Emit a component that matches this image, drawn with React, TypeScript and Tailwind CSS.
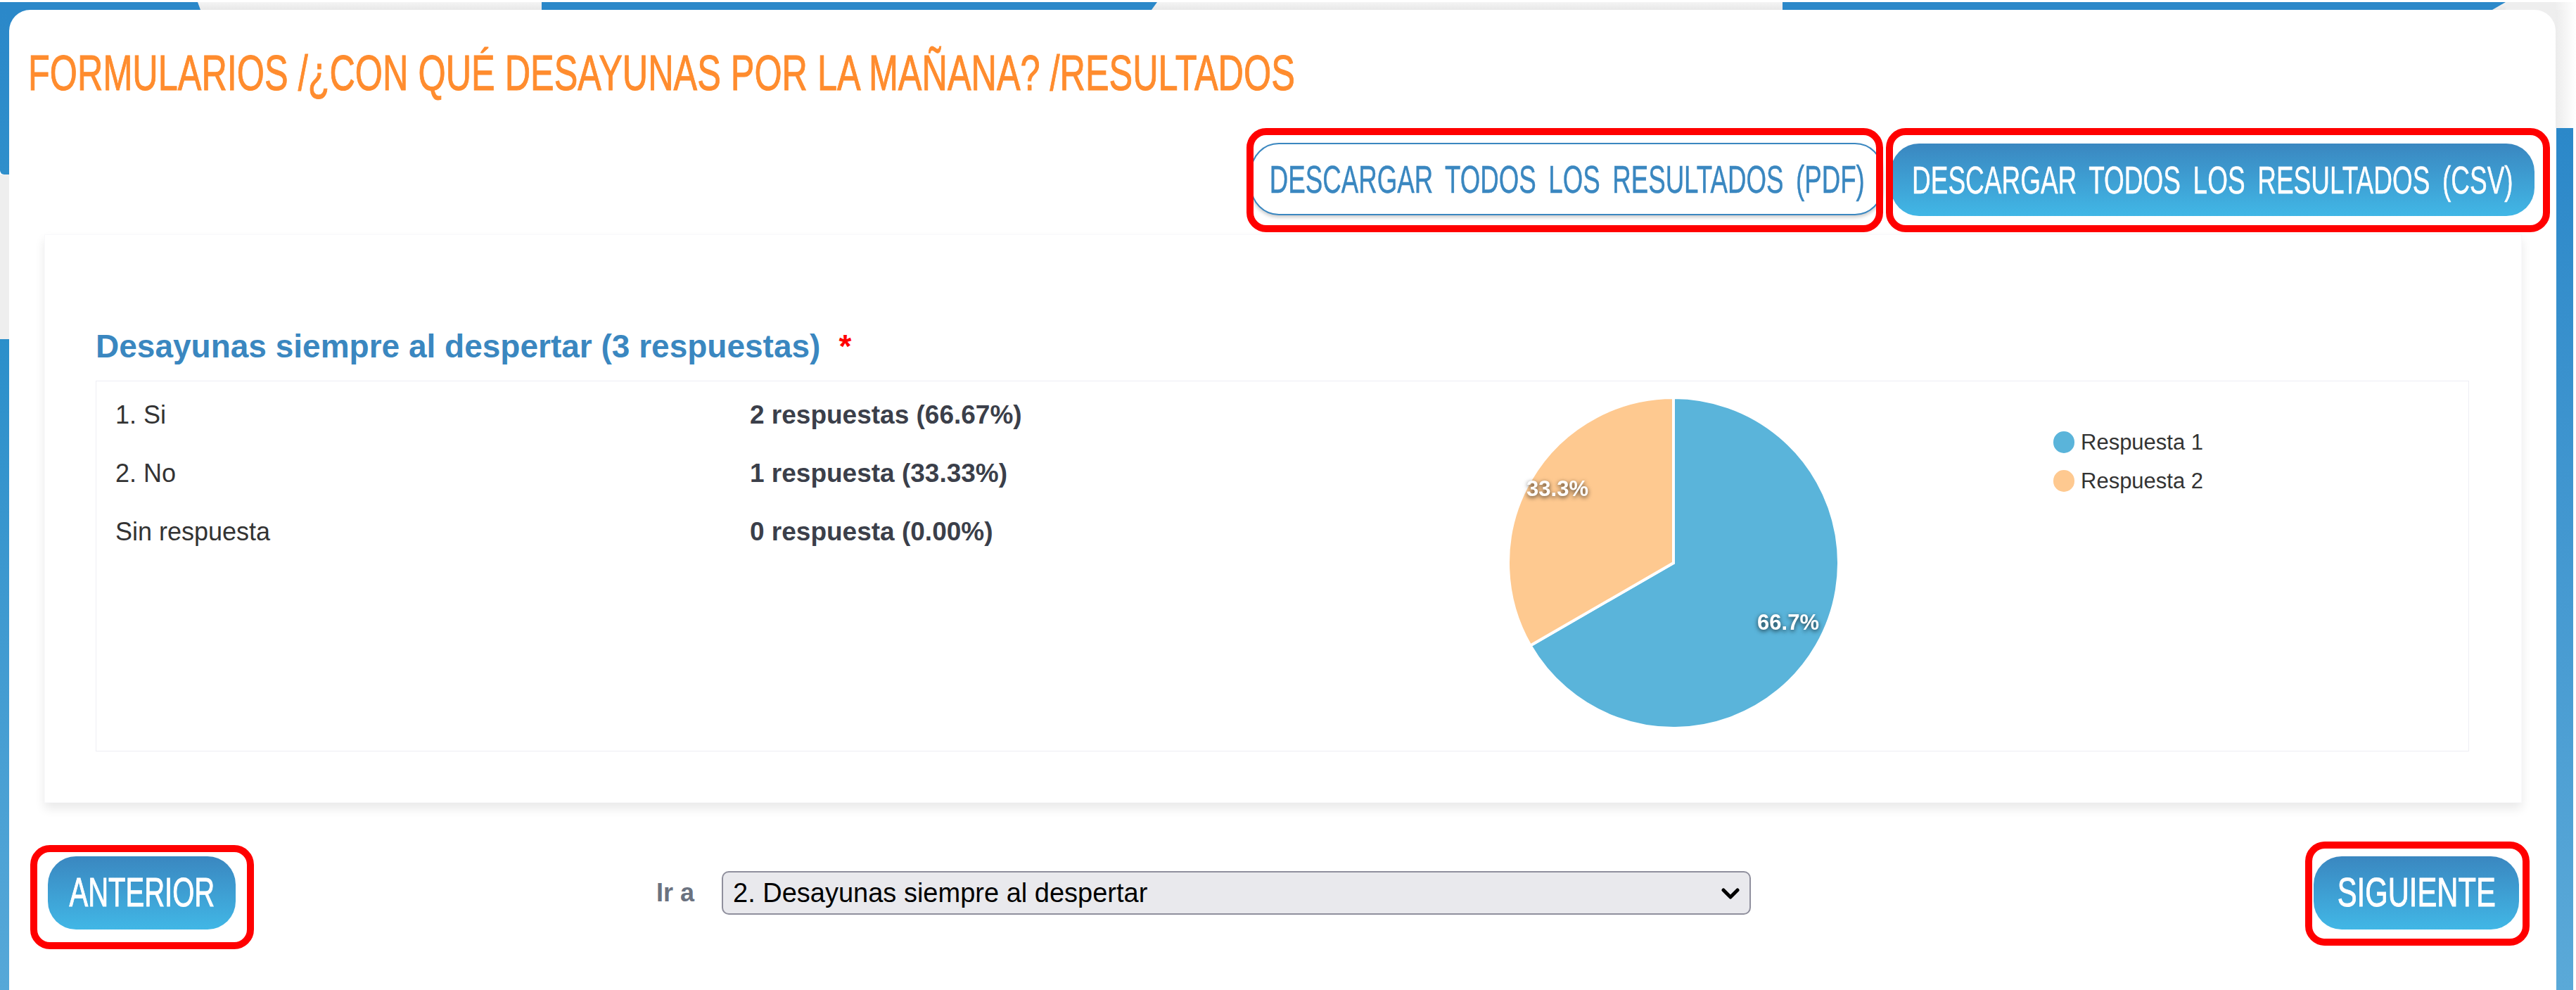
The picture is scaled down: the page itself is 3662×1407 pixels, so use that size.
import React from 'react';
import { ChevronDown } from 'lucide-react';

const labelShadow = 'drop-shadow-[0_2px_3px_rgba(0,0,0,0.7)]';

export default function App() {
    return (
        <div className="w-[3662px] h-[1407px] overflow-hidden bg-white font-['Liberation_Sans',Arial,sans-serif]">
            {/* top strip */}
            <div className="h-[3px]" />
            <div className="flex h-[11px] bg-gradient-to-b from-[#f4f4f4] to-[#e8e8e8]">
                <div className="w-[285px] bg-[#2b88c9] [clip-path:polygon(0_0,281px_0,100%_100%,0_100%)]" />
                <div className="w-[485px]" />
                <div className="w-[875px] bg-[#2b88c9] [clip-path:polygon(0_0,100%_0,867px_100%,0_100%)]" />
                <div className="w-[889px]" />
                <div className="w-[1028px] bg-[#2b88c9] [clip-path:polygon(0_0,100%_0,1009px_100%,0_100%)]" />
                <div className="flex-1 bg-gradient-to-r from-[#eeeeee] from-70% to-white" />
            </div>

            <div className="flex h-[1393px]">
                {/* left edge */}
                <div className="w-[13px] flex flex-col">
                    <div className="h-[234px] bg-gradient-to-b from-[#2b88c9] to-[#2f8fcb] rounded-bl-[6px]" />
                    <div className="h-[234px] bg-[#eeeeee]" />
                    <div className="flex-1 bg-gradient-to-b from-[#2b8fca] to-[#56a8d8]" />
                </div>

                {/* white panel */}
                <div className="w-[3620px] bg-[linear-gradient(90deg,#2b88c9_50%,#eeeeee_50%)]">
                    <div className="h-full bg-white rounded-t-[30px] flex flex-col">
                        <div className="h-[189px] pt-[55px] pl-[27px]">
                            <h1 className="inline-block origin-left scale-x-[0.72] text-[70px] leading-[70px] text-[#ff8c2e] [-webkit-text-stroke:1px_#ff8c2e] whitespace-nowrap">
                                FORMULARIOS /¿CON QUÉ DESAYUNAS POR LA MAÑANA? /RESULTADOS
                            </h1>
                        </div>

                        <div className="flex justify-end items-start gap-[11px] pr-[30px]">
                            <div className="relative">
                                <button className="w-[899px] h-[103px] border-2 border-[#3a87c0] rounded-[40px] bg-white shadow-[0_3px_5px_rgba(0,0,0,0.2)] flex items-center justify-center">
                                    <span className="scale-x-[0.655] text-[56px] [word-spacing:0.2em] text-[#3a87c0] [-webkit-text-stroke:0.5px_#3a87c0] whitespace-nowrap">DESCARGAR TODOS LOS RESULTADOS (PDF)</span>
                                </button>
                                <div className="absolute left-[-6px] top-[-21px] w-[905px] h-[148px] border-[10px] border-[#ff0000] rounded-[28px]" />
                            </div>
                            <div className="relative mt-[1px]">
                                <button className="w-[915px] h-[103px] rounded-[40px] bg-gradient-to-b from-[#3a87c0] to-[#41b7e6] flex items-center justify-center">
                                    <span className="scale-x-[0.66] text-[56px] [word-spacing:0.2em] text-white [-webkit-text-stroke:0.5px_white] whitespace-nowrap">DESCARGAR TODOS LOS RESULTADOS (CSV)</span>
                                </button>
                                <div className="absolute left-[-7px] top-[-22px] w-[944px] h-[148px] border-[10px] border-[#ff0000] rounded-[28px]" />
                            </div>
                        </div>

                        {/* results card */}
                        <div className="mt-[26px] ml-[50px] mr-[48px] h-[808px] bg-white border border-[#f9f9fb] shadow-[0_8px_14px_rgba(0,0,0,0.09)] pl-[72px] pr-[74px] flex flex-col">
                            <div className="h-[207px] pt-[133px] flex items-start">
                                <h2 className="text-[46px] leading-[50px] font-bold text-[#3a87c0]">Desayunas siempre al despertar (3 respuestas)</h2>
                                <span className="ml-[26px] text-[46px] leading-[50px] font-bold text-[#ff0000]">*</span>
                            </div>
                            <div className="h-[527px] border border-[#eeeef4] flex">
                                <div className="w-[1686px] pl-[27px] pt-[6px] text-[36px] text-[#333333]">
                                    <div className="h-[83px] flex items-center">
                                        <span className="w-[902px]">1. Si</span>
                                        <b className="text-[37px] text-[#3b3f4a]">2 respuestas (66.67%)</b>
                                    </div>
                                    <div className="h-[83px] flex items-center">
                                        <span className="w-[902px]">2. No</span>
                                        <b className="text-[37px] text-[#3b3f4a]">1 respuesta (33.33%)</b>
                                    </div>
                                    <div className="h-[83px] flex items-center">
                                        <span className="w-[902px]">Sin respuesta</span>
                                        <b className="text-[37px] text-[#3b3f4a]">0 respuesta (0.00%)</b>
                                    </div>
                                </div>
                                <div className="flex-1 flex items-start pl-[319px] pt-[21px]">
                                    <svg width="474" height="474" viewBox="-237 -237 474 474">
                                        <path d="M0 0 L0 -235 A235 235 0 1 1 -203.5 117.5 Z" fill="#5ab4da" stroke="#fff" strokeWidth="4" />
                                        <path d="M0 0 L-203.5 117.5 A235 235 0 0 1 0 -235 Z" fill="#fec990" stroke="#fff" strokeWidth="4" />
                                        <text x="163" y="95" textAnchor="middle" fontSize="31" fontWeight="700" fill="#fff" className={labelShadow}>66.7%</text>
                                        <text x="-165" y="-95" textAnchor="middle" fontSize="31" fontWeight="700" fill="#fff" className={labelShadow}>33.3%</text>
                                    </svg>
                                    <div className="ml-[303px] mt-[50px] flex flex-col gap-[24px] text-[31px] leading-[31px] text-[#333333]">
                                        <div className="flex items-center gap-[9px]"><span className="w-[30px] h-[31px] rounded-full bg-[#5ab4da]" />Respuesta 1</div>
                                        <div className="flex items-center gap-[9px]"><span className="w-[30px] h-[31px] rounded-full bg-[#fec990]" />Respuesta 2</div>
                                    </div>
                                </div>
                            </div>
                        </div>

                        {/* bottom nav */}
                        <div className="mt-[76px] pl-[55px] pr-[52px] flex items-center">
                            <div className="relative">
                                <button className="w-[267px] h-[104px] pb-[4px] rounded-[40px] bg-gradient-to-b from-[#3a87c0] to-[#41b7e6] flex items-center justify-center">
                                    <span className="scale-x-[0.69] text-[58px] text-white [-webkit-text-stroke:1px_white] whitespace-nowrap">ANTERIOR</span>
                                </button>
                                <div className="absolute left-[-25px] top-[-16px] w-[318px] h-[148px] border-[10px] border-[#ff0000] rounded-[28px]" />
                            </div>
                            <label className="ml-[598px] w-[93px] text-[36px] font-bold text-[#6b7280]">Ir a</label>
                            <div className="relative">
                                <select className="w-[1463px] h-[62px] pl-[14px] appearance-none rounded-[10px] border-2 border-[#8f8f9d] bg-[#e9e9ed] text-[38px] text-black">
                                    <option>2. Desayunas siempre al despertar</option>
                                </select>
                                <ChevronDown className="absolute right-[9px] top-[12px] w-[40px] h-[40px] text-black" strokeWidth={3} />
                            </div>
                            <div className="relative ml-auto">
                                <button className="w-[292px] h-[104px] pb-[4px] rounded-[40px] bg-gradient-to-b from-[#3a87c0] to-[#41b7e6] flex items-center justify-center">
                                    <span className="scale-x-[0.72] text-[58px] text-white [-webkit-text-stroke:1px_white] whitespace-nowrap">SIGUIENTE</span>
                                </button>
                                <div className="absolute left-[-12px] top-[-21px] w-[319px] h-[148px] border-[10px] border-[#ff0000] rounded-[28px]" />
                            </div>
                        </div>
                    </div>
                </div>

                {/* right edge */}
                <div className="flex-1 flex flex-col">
                    <div className="h-[168px] bg-gradient-to-r from-[#ececec] to-white" />
                    <div className="flex-1 ml-[1px] w-[24px] bg-gradient-to-b from-[#2b88c9] to-[#5aa9d8]" />
                </div>
            </div>
        </div>
    );
}
